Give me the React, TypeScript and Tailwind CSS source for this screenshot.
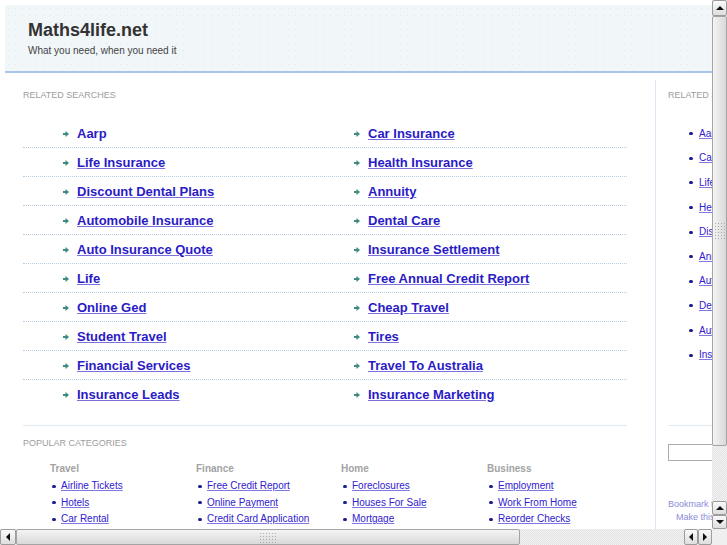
import React from "react";

const leftLinks = ["Aarp", "Life Insurance", "Discount Dental Plans", "Automobile Insurance", "Auto Insurance Quote", "Life", "Online Ged", "Student Travel", "Financial Services", "Insurance Leads"];
const rightLinks = ["Car Insurance", "Health Insurance", "Annuity", "Dental Care", "Insurance Settlement", "Free Annual Credit Report", "Cheap Travel", "Tires", "Travel To Australia", "Insurance Marketing"];
const sideLinks = ["Aarp", "Car Insurance", "Life Insurance", "Health Insurance", "Discount Dental Plans", "Annuity", "Automobile Insurance", "Dental Care", "Auto Insurance Quote", "Insurance Settlement"];
const cats = [
  { t: "Travel", l: ["Airline Tickets", "Hotels", "Car Rental"] },
  { t: "Finance", l: ["Free Credit Report", "Online Payment", "Credit Card Application"] },
  { t: "Home", l: ["Foreclosures", "Houses For Sale", "Mortgage"] },
  { t: "Business", l: ["Employment", "Work From Home", "Reorder Checks"] },
];

function Arrow() {
  return (
    <svg width="6" height="6" viewBox="0 0 6 6" className="mr-[8px] shrink-0">
      <rect x="0" y="2" width="3" height="2" fill="#3d8b80" />
      <polygon points="2.5,0 6,3 2.5,6" fill="#3d8b80" />
    </svg>
  );
}

function BigLink({ text, i }: { text: string; i: number }) {
  return (
    <div className="flex items-center">
      <Arrow />
      <a className={`text-[13px] font-bold text-[#2a1bc6] leading-[16px] ${text === "Aarp" && i === 0 ? "no-underline" : "underline decoration-[#7b70dc]"}`}>{text}</a>
    </div>
  );
}

function Tri({ dir }: { dir: "up" | "down" | "left" | "right" }) {
  const pts = {
    up: "0,5 4,1 8,5",
    down: "0,1 4,5 8,1",
    left: "5,0 1,4 5,8",
    right: "1,0 5,4 1,8",
  }[dir];
  const vert = dir === "up" || dir === "down";
  return (
    <svg width={vert ? 8 : 6} height={vert ? 6 : 8} viewBox={vert ? "0 0 8 6" : "0 0 6 8"}>
      <polygon points={pts} fill="#111" />
    </svg>
  );
}

function Btn({ dir, cls }: { dir: "up" | "down" | "left" | "right"; cls: string }) {
  return (
    <div className={`${cls} shrink-0 flex items-center justify-center border border-[#9c9c9c] rounded-[2px] bg-gradient-to-b from-[#fafafa] to-[#dedede]`}>
      <Tri dir={dir} />
    </div>
  );
}

const trough = "bg-[repeating-conic-gradient(#e2e2e2_0_25%,#f3f3f3_0_50%)] bg-[length:2px_2px]";
const grip = "bg-[radial-gradient(circle,#a9a9a9_0.7px,transparent_0.9px)] bg-[length:3px_3px]";

export default function App() {
  return (
    <div className="w-[727px] h-[545px] overflow-hidden bg-white font-['Liberation_Sans',Arial,sans-serif] flex flex-col">
      <div className="flex h-[529px]">
        <div className="w-[712px] h-[529px] overflow-hidden relative">
          <div className="w-[1000px] pl-[5px] pt-[5px]">
            {/* header */}
            <div className="bg-[#f1f6f9] bg-[radial-gradient(circle,#dfe8ee_0.6px,transparent_0.9px)] bg-[length:7px_7px] border-b-2 border-[#a9c3ea] pl-[23px] pt-[15px] pb-[14px]">
              <div className="text-[18px] font-bold leading-[21px] text-[#333]">Maths4life.net</div>
              <div className="text-[10px] leading-[12px] text-[#444] mt-[4px]">What you need, when you need it</div>
            </div>
            <div className="flex mt-[7px]">
              {/* main column */}
              <div className="w-[651px] h-[520px] border-r border-[#dde6f1] pl-[18px] pt-[10px] shrink-0">
                <div className="text-[9px] leading-[11px] text-[#9d9d9d] uppercase">Related Searches</div>
                <div className="mt-[18px] w-[604px]">
                  {leftLinks.map((l, i) => (
                    <div key={i} className={`flex h-[29px] ${i < 9 ? "border-b border-dotted border-[#b9cde2]" : ""}`}>
                      <div className="w-[291px] pl-[40px] pt-[2px] flex items-center h-[28px]">
                        <BigLink text={l} i={i} />
                      </div>
                      <div className="w-[313px] pl-[40px] pt-[2px] flex items-center h-[28px]">
                        <BigLink text={rightLinks[i]} i={i + 10} />
                      </div>
                    </div>
                  ))}
                </div>
                <div className="mt-[16px] w-[604px] border-t border-[#e1e9f3]" />
                <div className="mt-[12px] text-[9px] leading-[11px] text-[#9d9d9d] uppercase">Popular Categories</div>
                <div className="mt-[14px] ml-[27px] grid grid-cols-[146px_145px_146px_145px]">
                  {cats.map((c) => (
                    <div key={c.t}>
                      <div className="text-[10px] leading-[12px] font-bold text-[#a3a3a3]">{c.t}</div>
                      <div className="mt-[3px]">
                        {c.l.map((x) => (
                          <div key={x} className="h-[16.5px] flex items-center pl-[2px]">
                            <span className="w-[4px] h-[3px] rounded-full bg-[#1c1c8c] mr-[5px] shrink-0" />
                            <a className="text-[10px] leading-[12px] text-[#2f20d0] underline decoration-[#8077e0]">{x}</a>
                          </div>
                        ))}
                      </div>
                    </div>
                  ))}
                </div>
              </div>
              {/* side column */}
              <div className="w-[260px] pl-[12px] pt-[10px] shrink-0">
                <div className="text-[9px] leading-[11px] text-[#9d9d9d] uppercase">Related Searches</div>
                <div className="mt-[20.5px] pl-[21px]">
                  {sideLinks.map((x) => (
                    <div key={x} className="h-[24.6px] flex items-center">
                      <span className="w-[4px] h-[3px] rounded-full bg-[#1c1c8c] mr-[6px] shrink-0" />
                      <a className="text-[10px] leading-[12px] text-[#2f20d0] underline decoration-[#8077e0] whitespace-nowrap">{x}</a>
                    </div>
                  ))}
                </div>
                <div className="mt-[58px] border-t border-[#e1e9f3]" />
                <div className="mt-[18px] w-[160px] h-[17px] border border-[#ababab] bg-white" />
                <div className="mt-[38px] text-[9px] leading-[11px] text-[#8c8cd8] whitespace-nowrap">Bookmark this page</div>
                <div className="mt-[2px] pl-[8px] text-[9px] leading-[11px] text-[#8c8cd8] whitespace-nowrap">Make this your homepage</div>
              </div>
            </div>
          </div>
        </div>
        {/* vertical scrollbar */}
        <div className={`w-[15px] h-[529px] flex flex-col ${trough}`}>
          <Btn dir="up" cls="h-[16px] w-[15px]" />
          <div className="h-[430px] w-[15px] border border-[#a4a4a4] rounded-[2px] bg-gradient-to-r from-[#f4f4f4] to-[#d9d9d9] flex items-center justify-center">
            <div className={`w-[11px] h-[18px] ${grip}`} />
          </div>
          <div className="flex-1" />
          <Btn dir="up" cls="h-[14px] w-[15px]" />
          <Btn dir="down" cls="h-[14px] w-[15px]" />
        </div>
      </div>
      {/* horizontal scrollbar */}
      <div className="flex h-[16px]">
        <div className={`w-[712px] h-[16px] flex ${trough}`}>
          <Btn dir="left" cls="w-[16px] h-[16px]" />
          <div className="w-[504px] h-[16px] border border-[#a4a4a4] rounded-[2px] bg-gradient-to-b from-[#f4f4f4] to-[#d9d9d9] flex items-center justify-center">
            <div className={`w-[18px] h-[11px] ${grip}`} />
          </div>
          <div className="flex-1" />
          <Btn dir="left" cls="w-[14px] h-[16px]" />
          <Btn dir="right" cls="w-[14px] h-[16px]" />
        </div>
        <div className="w-[15px] h-[16px] bg-[#efefef]" />
      </div>
    </div>
  );
}
